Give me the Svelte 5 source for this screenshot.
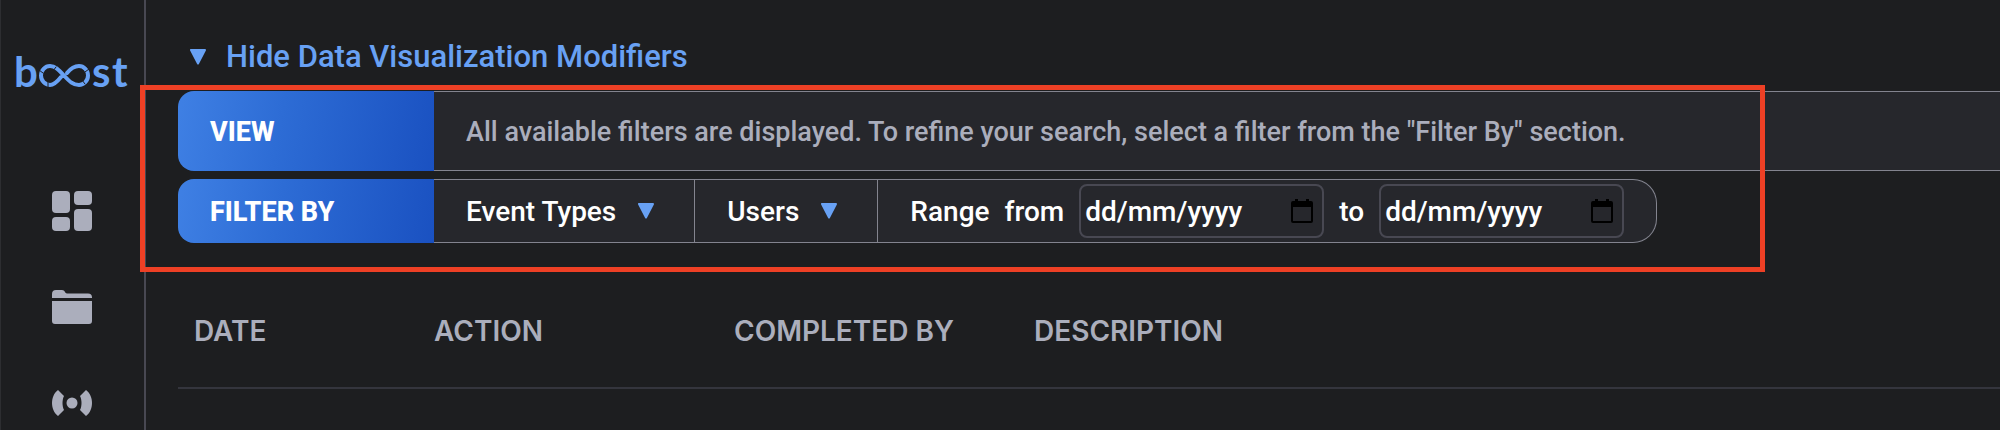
<script>
    let open = true
    let from = ""
    let to = ""

    const filters = ["Event Types", "Users"]
    const columns = ["Date", "Action", "Completed by", "Description"]

    function toggleModifiers() {
        open = !open
    }
</script>

<div class="page">
    <nav class="sidebar">
        <a class="logo" href="#home" aria-label="boost">
            <svg width="123" height="54" viewBox="0 0 123 54">
                <text x="4" y="41">b</text>
                <g transform="translate(3 10)">
                    <path d="M48 21C44 26 41 29 37 29A9 9.500 0 0 1 37 10C42 10 45 13 51 19.500S60 29 66 29A9 9.500 0 0 0 66 10C61 10 58 12 54 17"/>
                    <path class="cut" d="M26 14l4 3M35 26v6M43 11l-3 4M72 28l-3-4M76 13l-4 3"/>
                </g>
                <text x="82" y="41">s</text>
                <text x="102" y="41">t</text>
            </svg>
        </a>
        <a class="item" href="#dashboard" aria-label="Dashboard">
            <svg width="40" height="40" viewBox="0 0 40 40">
                <rect width="18" height="22" rx="4"/>
                <rect x="22" width="18" height="14" rx="4"/>
                <rect y="26" width="18" height="14" rx="4"/>
                <rect x="22" y="18" width="18" height="22" rx="4"/>
            </svg>
        </a>
        <a class="item" href="#files" aria-label="Files">
            <svg width="40" height="36" viewBox="0 0 40 36">
                <path d="M0 8V4a4 4 0 0 1 4-4h6c3 0 3 3.500 5 3.500h21a4 4 0 0 1 4 4V8zM0 11h40v20a3 3 0 0 1-3 3H3a3 3 0 0 1-3-3z"/>
            </svg>
        </a>
        <a class="item" href="#live" aria-label="Live">
            <svg width="40" height="26" viewBox="0 0 40 26">
                <circle cx="20" cy="13" r="5.500"/>
                <path d="M6 0l6 6c-2 4-2 10 0 14l-6 6C-2 20-2 6 6 0zM34 0l-6 6c2 4 2 10 0 14l6 6c8-6 8-20 0-26z"/>
            </svg>
        </a>
    </nav>

    <main>
        <button class="toggle" on:click={toggleModifiers}>
            <svg class="arrow" width="16" height="16" viewBox="0 0 16 16"><path d="M1 1h14L8 14.500z"/></svg>
            {open ? "Hide" : "Show"} Data Visualization Modifiers
        </button>

        {#if open}
            <section class="modifiers">
                <div class="row view">
                    <h2>VIEW</h2>
                    <p>All available filters are displayed. To refine your search, select a filter from the "Filter By" section.</p>
                </div>
                <div class="row filter">
                    <h2>FILTER BY</h2>
                    {#each filters as filter}
                        <button class="drop">
                            {filter}
                            <svg class="arrow" width="16" height="16" viewBox="0 0 16 16"><path d="M1 1h14L8 14.500z"/></svg>
                        </button>
                    {/each}
                    <div class="range">
                        <span>Range</span>
                        <label for="from">from</label>
                        <div class="date">
                            <input id="from" type="text" placeholder="dd/mm/yyyy" bind:value={from}>
                            <svg width="22" height="24" viewBox="0 0 22 24"><path d="M2 2h2V0h3v2h8V0h3v2h2a2 2 0 0 1 2 2v18a2 2 0 0 1-2 2H2a2 2 0 0 1-2-2V4a2 2 0 0 1 2-2zm0 6v14h18V8z"/></svg>
                        </div>
                        <label for="to">to</label>
                        <div class="date">
                            <input id="to" type="text" placeholder="dd/mm/yyyy" bind:value={to}>
                            <svg width="22" height="24" viewBox="0 0 22 24"><path d="M2 2h2V0h3v2h8V0h3v2h2a2 2 0 0 1 2 2v18a2 2 0 0 1-2 2H2a2 2 0 0 1-2-2V4a2 2 0 0 1 2-2zm0 6v14h18V8z"/></svg>
                        </div>
                    </div>
                </div>
                <div class="highlight"></div>
            </section>
        {/if}

        <table>
            <thead>
                <tr>
                    {#each columns as column}
                        <th>{column}</th>
                    {/each}
                </tr>
            </thead>
        </table>
    </main>
</div>

<style>
    :global(body) {
        background-color: #1d1e20;
    }

    .page {
        display: flex;
        min-height: 100vh;
        box-sizing: border-box;
        border-left: 1px solid #2d2e31;
        background-color: #1d1e20;
        color: #fff;
        font-family: Roboto, "Liberation Sans", sans-serif;
        font-size: 28px;
        font-weight: 500;
        overflow: hidden;
    }

    .sidebar {
        display: flex;
        flex: none;
        flex-direction: column;
        align-items: center;
        width: 145px;
        height: 100vh;
        box-sizing: border-box;
        padding: 46px 2px 0 0;
        border-right: 2px solid #484852;
    }

    .sidebar svg {
        display: block;
    }

    .logo {
        margin-bottom: 91px;
        fill: #68a1f4;
        font-family: Lato, sans-serif;
        font-size: 42px;
        font-weight: 700;
    }

    .logo path {
        fill: none;
        stroke: #68a1f4;
        stroke-width: 4;
        stroke-linecap: round;
    }

    .logo .cut {
        stroke: #1d1e20;
        stroke-width: 1;
    }

    .item {
        margin-bottom: 59px;
        fill: #abaebc;
    }

    .item + .item {
        margin-bottom: 64px;
    }

    main {
        flex: 1;
        min-width: 0;
        padding-left: 32px;
    }

    button {
        display: flex;
        align-items: center;
        border: none;
        background: none;
        color: inherit;
        font: inherit;
        cursor: pointer;
    }

    .arrow {
        fill: #68a1f4;
        stroke: #68a1f4;
        stroke-width: 2;
        stroke-linejoin: round;
    }

    .toggle {
        gap: 20px;
        padding: 37px 12px 14px;
        color: #68a1f4;
        font-size: 31px;
        line-height: 40px;
    }

    .modifiers {
        position: relative;
        display: flex;
        flex-direction: column;
        align-items: flex-start;
        gap: 8px;
        padding-bottom: 29px;
    }

    .row {
        display: flex;
        box-sizing: border-box;
    }

    .view {
        width: 100%;
        height: 80px;
    }

    .filter {
        height: 64px;
    }

    h2 {
        display: flex;
        flex: none;
        align-items: center;
        width: 256px;
        box-sizing: border-box;
        margin: 0;
        padding: 2px 0 0 32px;
        border-radius: 16px 0 0 16px;
        background: linear-gradient(100deg, #3f80e4, #2d6cd5 40%, #1a51c1);
        font-size: 27px;
        font-weight: 800;
    }

    p {
        display: flex;
        flex: 1;
        align-items: center;
        margin: 0;
        padding: 2px 0 0 32px;
        border: 1px solid #83848f;
        border-width: 1px 0;
        background-color: #26272c;
        color: #abaebc;
        font-size: 27px;
        white-space: nowrap;
    }

    .drop {
        gap: 22px;
        padding: 0 40px 0 32px;
        border: 1px solid #83848f;
        border-left: none;
        background-color: #26272c;
    }

    .range {
        display: flex;
        align-items: center;
        gap: 15px;
        padding: 0 32px;
        border: 1px solid #83848f;
        border-left: none;
        border-radius: 0 24px 24px 0;
        background-color: #26272c;
    }

    .date {
        display: flex;
        align-items: center;
        width: 245px;
        height: 54px;
        box-sizing: border-box;
        padding: 0 9px 0 4px;
        border: 2px solid #484852;
        border-radius: 8px;
    }

    .date svg {
        flex: none;
    }

    input {
        flex: 1;
        min-width: 0;
        padding: 0;
        border: none;
        outline: none;
        background: none;
        color: #fff;
        font: inherit;
    }

    input::placeholder {
        color: #fff;
        opacity: 1;
    }

    .highlight {
        position: absolute;
        top: -6px;
        right: 235px;
        bottom: 0;
        left: -38px;
        border: 5px solid #ee4025;
        pointer-events: none;
    }

    table {
        width: 100%;
        table-layout: fixed;
        border-collapse: collapse;
    }

    th {
        height: 113px;
        padding: 2px 0 0 16px;
        border-bottom: 2px solid #34353d;
        color: #abaebc;
        font-family: Inter, sans-serif;
        font-weight: 600;
        text-align: left;
        text-transform: uppercase;
    }

    th:first-child {
        width: 224px;
    }

    th:nth-child(2),
    th:nth-child(3) {
        width: 284px;
    }
</style>
